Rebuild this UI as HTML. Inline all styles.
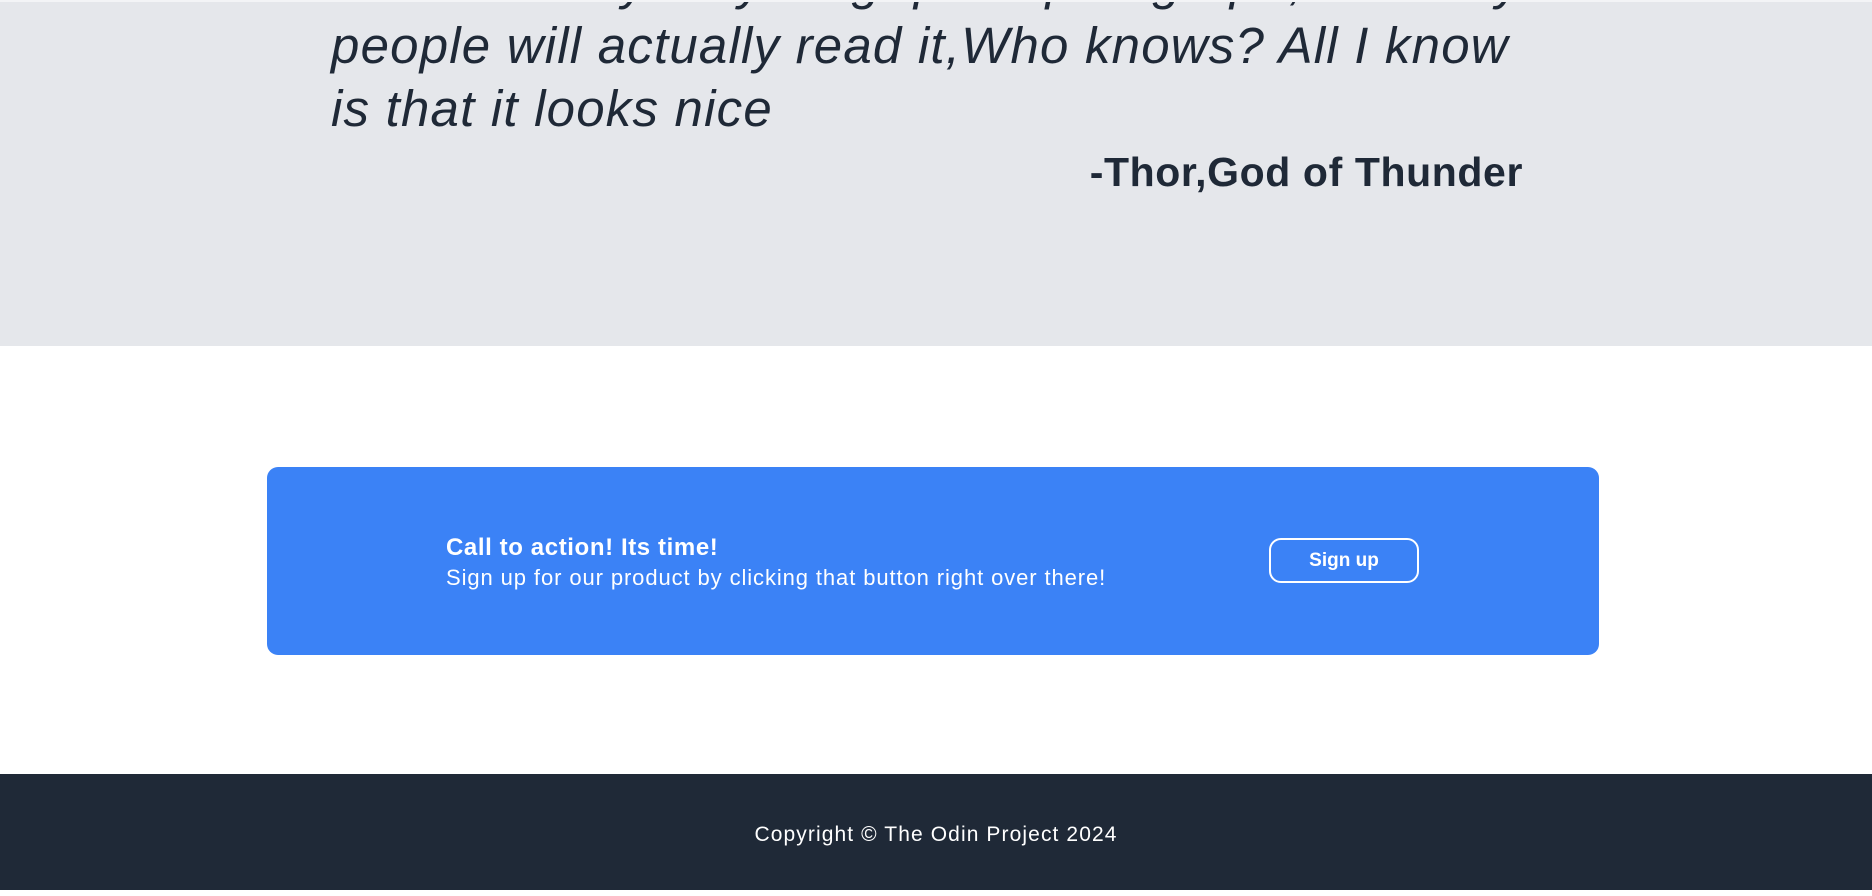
<!DOCTYPE html>
<html><head><meta charset="utf-8"><style>
*{margin:0;padding:0;box-sizing:border-box}
html,body{width:1872px;height:890px;overflow:hidden;background:#fff;font-family:"Liberation Sans",Arial,sans-serif}
.top{position:absolute;left:0;top:0;width:1872px;height:346px;background:#e5e7eb;border-top:2px solid #f3f4f6;overflow:hidden}
.q{position:absolute;left:331px;font-style:italic;font-size:51px;color:#1f2937;white-space:nowrap;line-height:1;letter-spacing:1.2px}
.thor{position:absolute;right:349px;top:147px;font-weight:bold;font-size:41px;color:#1f2937;white-space:nowrap;letter-spacing:0.6px}
.cta{position:absolute;left:267px;top:467px;width:1332px;height:188px;background:#3b82f6;border-radius:11px;color:#fff}
.t1{position:absolute;left:179px;top:67px;font-weight:bold;font-size:24px;white-space:nowrap;letter-spacing:0.6px}
.t2{position:absolute;left:179px;top:98px;font-size:22px;white-space:nowrap;letter-spacing:0.9px}
.btn{position:absolute;left:1002px;top:71px;width:150px;height:45px;border:2px solid #fff;border-radius:12px;font-weight:bold;font-size:19px;text-align:center;line-height:41px}
.foot{position:absolute;left:0;top:774px;width:1872px;height:116px;background:#1f2937;color:#fff;font-size:21px;text-align:center;line-height:122px;letter-spacing:1.1px}
</style></head><body>
<div class="top">
<div class="q" style="top:-46px">This is a very very long quote paragraph, and only</div>
<div class="q" style="top:18px">people will actually read it,Who knows? All I know</div>
<div class="q" style="top:81px">is that it looks nice</div>
<div class="thor">-Thor,God of Thunder</div>
</div>
<div class="cta">
<div class="t1">Call to action! Its time!</div>
<div class="t2">Sign up for our product by clicking that button right over there!</div>
<div class="btn">Sign up</div>
</div>
<div class="foot">Copyright © The Odin Project 2024</div>
</body></html>
